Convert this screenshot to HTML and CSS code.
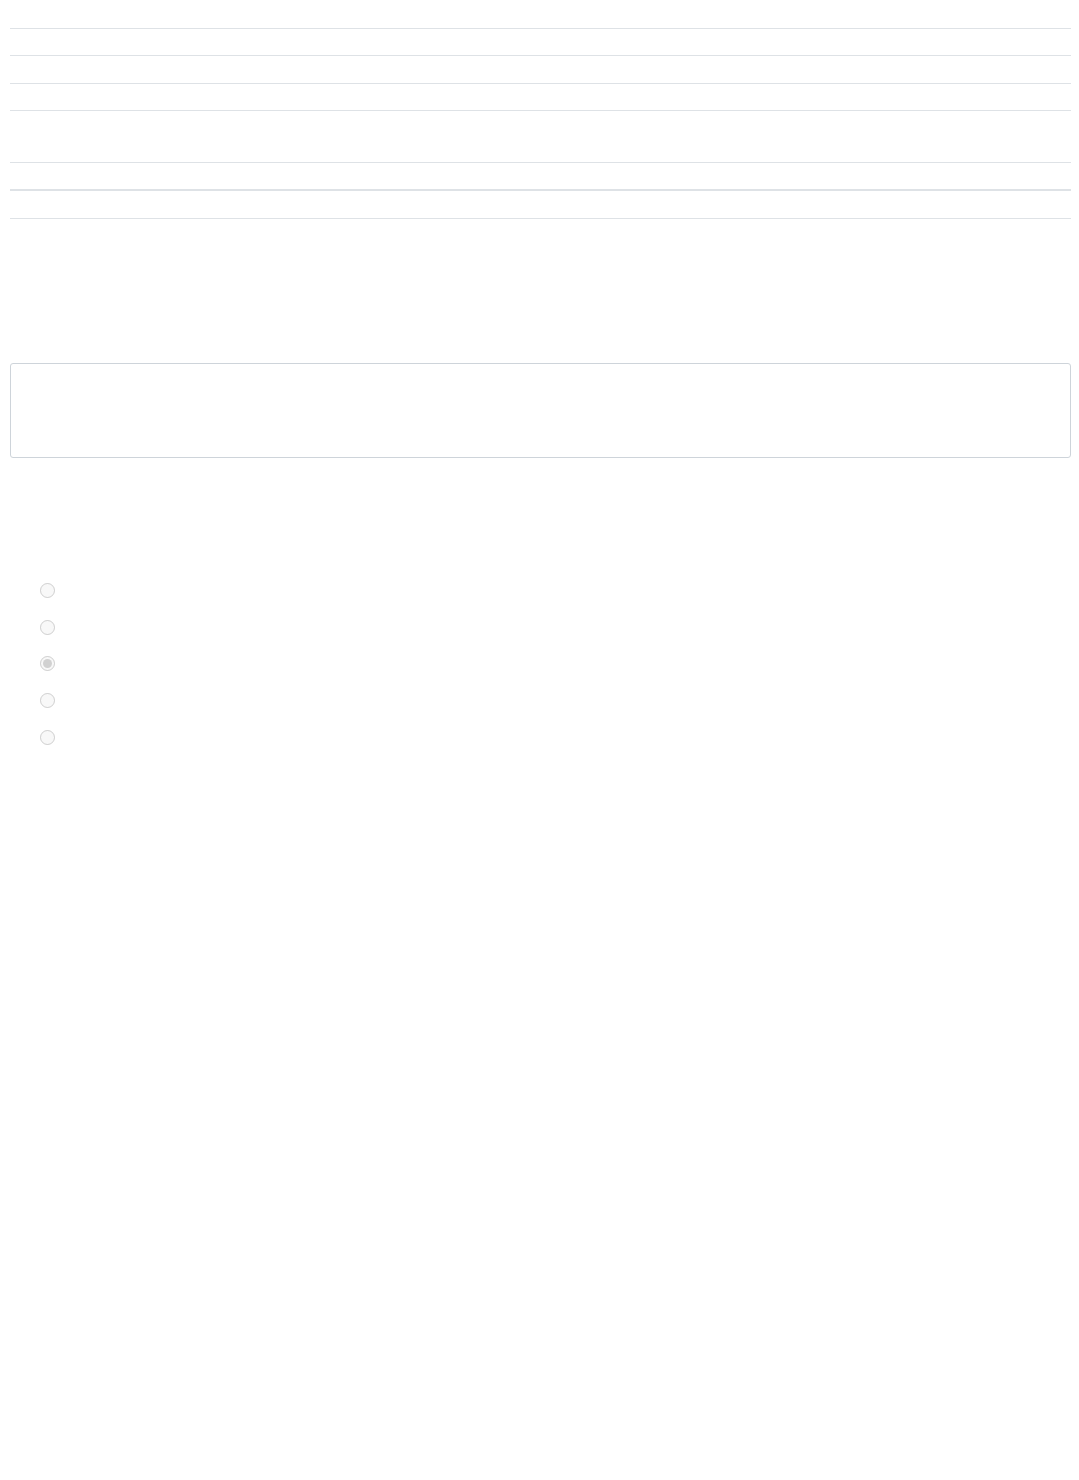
FILE: index.html
```html
<!DOCTYPE html>
<html lang="en">
<head>
<meta charset="utf-8">
<title>Form</title>
<link rel="stylesheet" href="styles.css">
</head>
<body>
<div class="page">
  <div class="table">
    <div class="row r-top"></div>
    <div class="row r-27"></div>
    <div class="row r-28"></div>
    <div class="row r-27"></div>
    <div class="row r-52"></div>
    <div class="row r-27 head-end"></div>
    <div class="row r-29"></div>
    <div class="row r-end"></div>
  </div>
  <div class="textbox"></div>
  <div class="options">
    <label class="opt"><input type="radio" name="o" disabled></label>
    <label class="opt"><input type="radio" name="o" disabled></label>
    <label class="opt"><input type="radio" name="o" disabled checked></label>
    <label class="opt"><input type="radio" name="o" disabled></label>
    <label class="opt"><input type="radio" name="o" disabled></label>
  </div>
</div>
</body>
</html>
```
FILE: styles.css
```css
html, body {
  margin: 0;
  padding: 0;
  background: #ffffff;
  font-family: "Liberation Sans", Arial, sans-serif;
}
.page {
  padding: 0 8px 0 10px;
}
.table {
  display: flex;
  flex-direction: column;
}
.row {
  box-sizing: border-box;
  border-top: 1px solid #dee2e6;
}
.r-top {
  height: 28px;
  border-top: none;
}
.r-27 { height: 27px; }
.r-28 { height: 28px; }
.r-52 { height: 52px; }
.r-29 {
  height: 29px;
  border-top: 2px solid #dee2e6;
}
.r-end { height: 1px; }
.textbox {
  box-sizing: border-box;
  margin-top: 144px;
  height: 95px;
  border: 1px solid #ced4da;
  border-radius: 3px;
}
.options {
  margin-top: 114px;
  padding-left: 30px;
  display: flex;
  flex-direction: column;
}
.opt {
  height: 36.75px;
  display: flex;
  align-items: center;
}
.opt input {
  width: 15px;
  height: 15px;
  margin: 0;
}
```
